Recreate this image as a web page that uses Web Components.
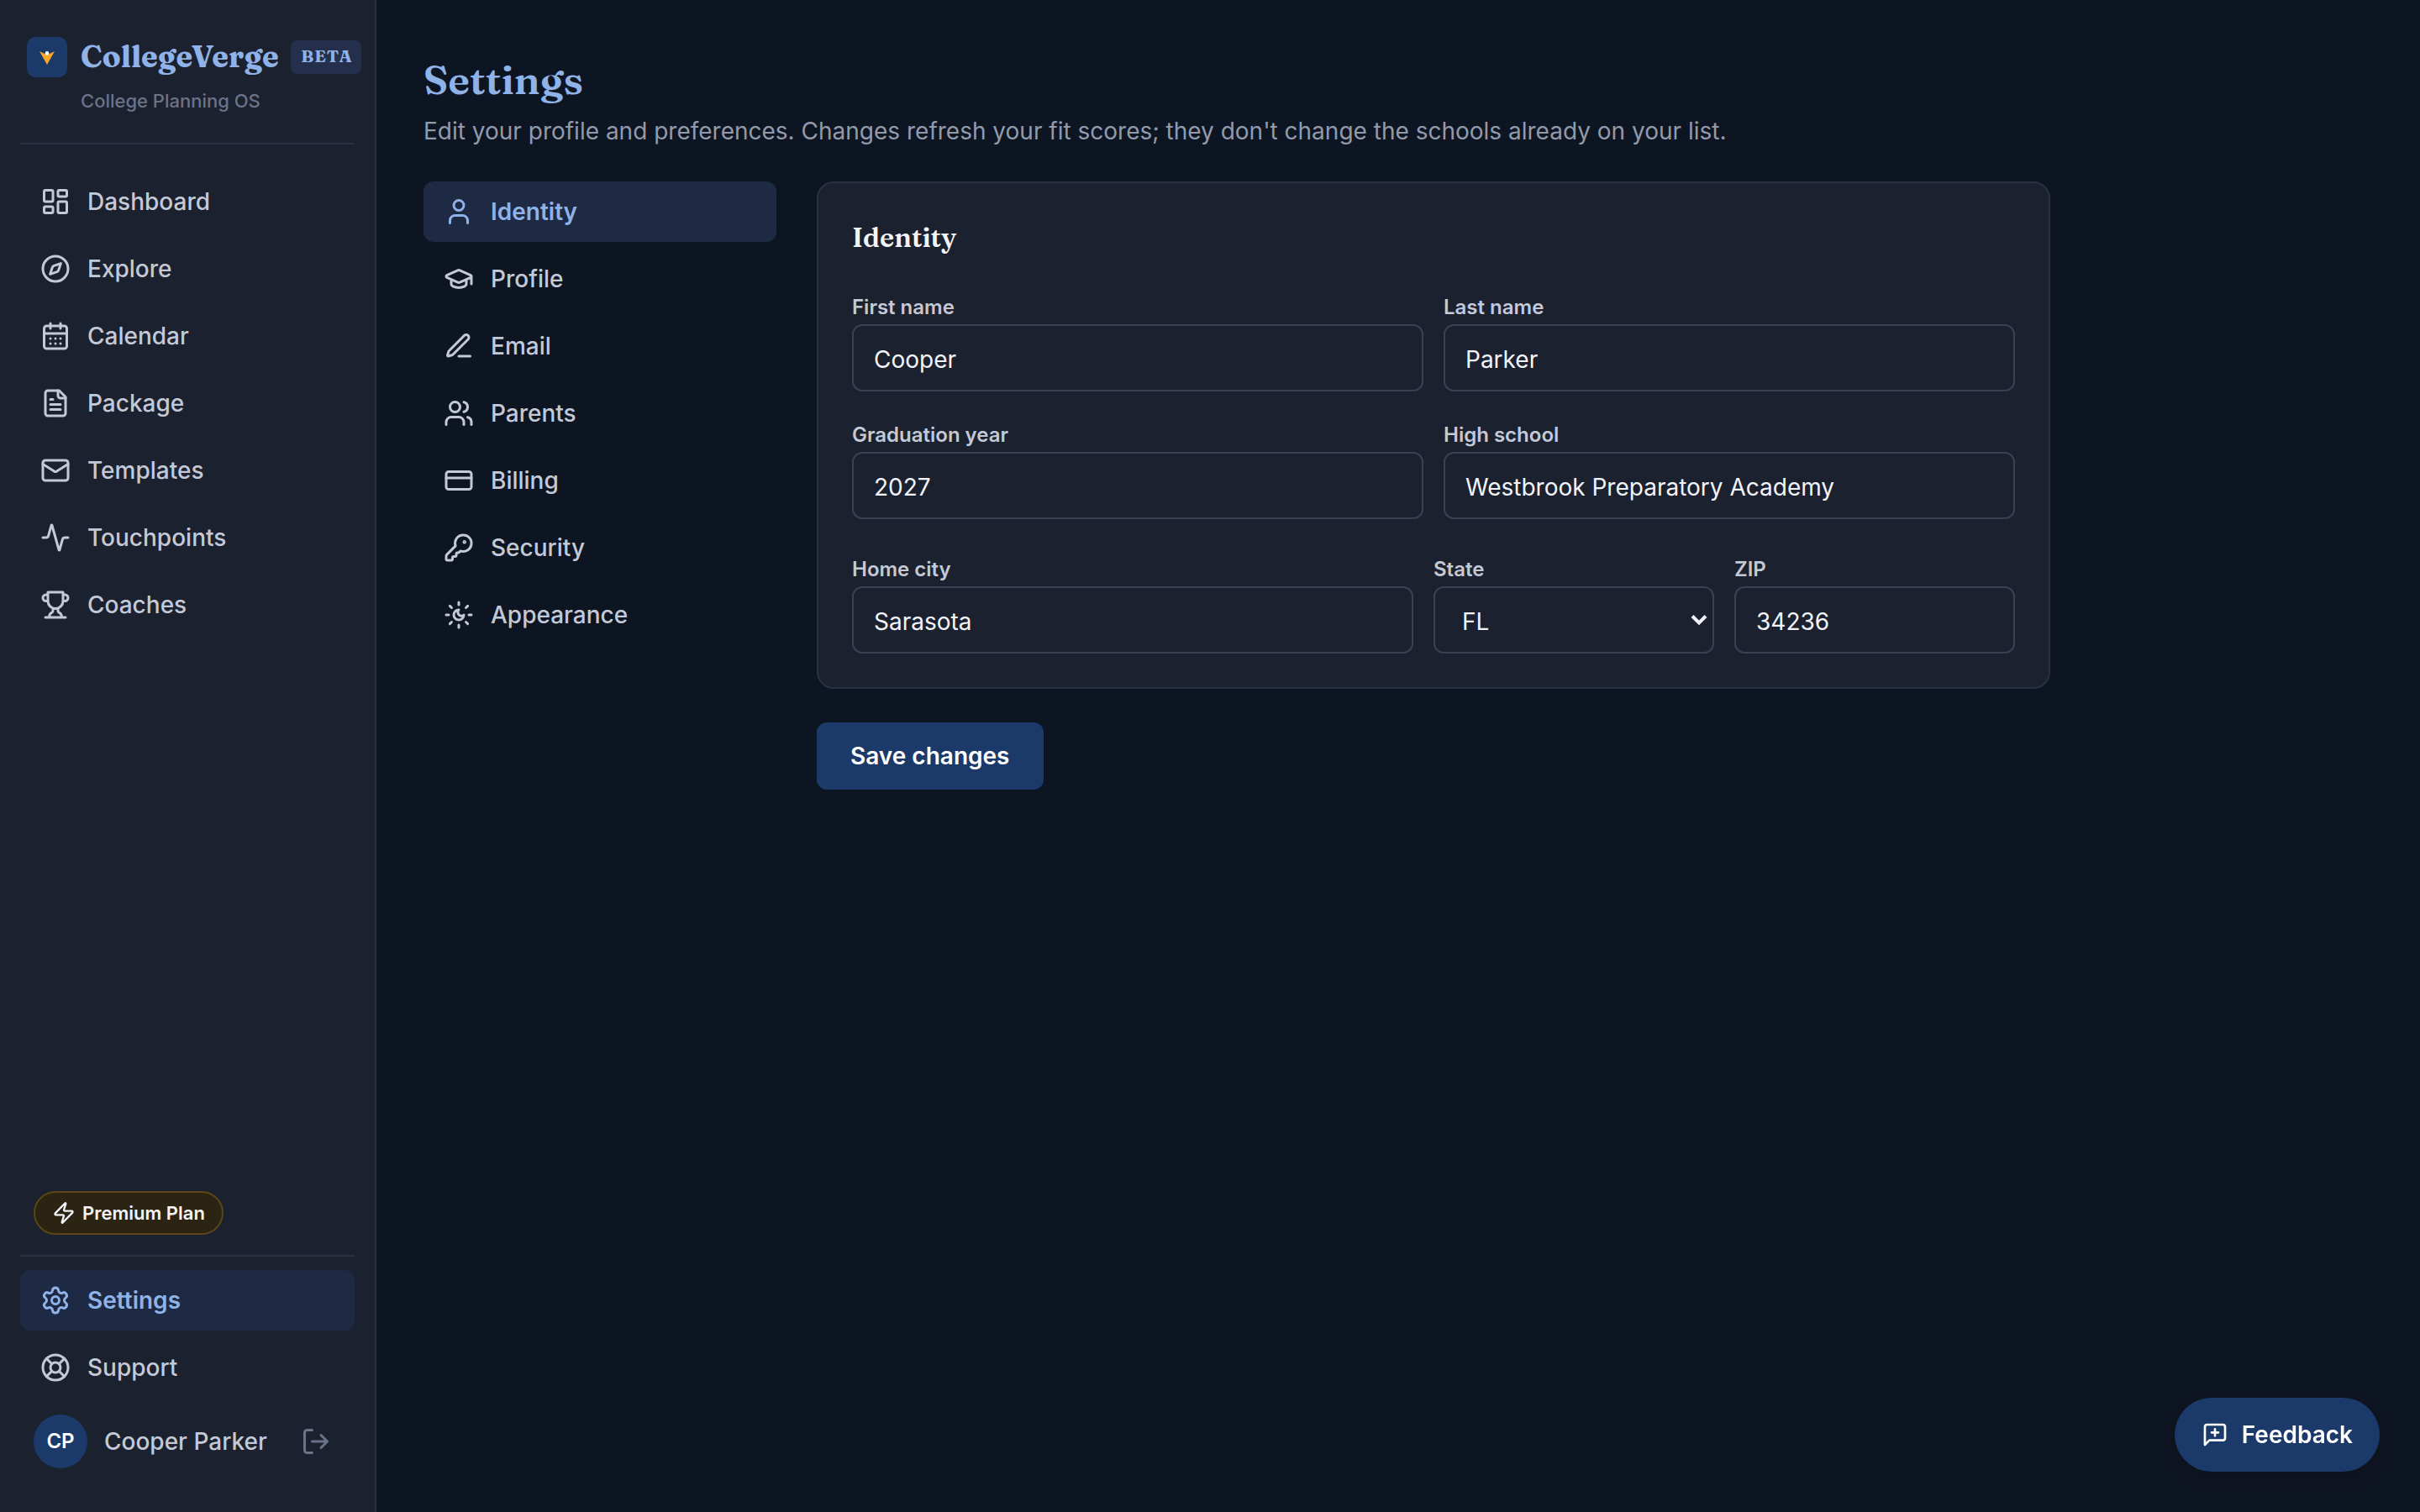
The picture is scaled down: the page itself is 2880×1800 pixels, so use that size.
<!DOCTYPE html>
<html lang="en">
<head>
<meta charset="utf-8">
<title>Settings - CollegeVerge</title>
<style>
  :root {
    --page: #0e1522;
    --surface: #1b212e;
    --line: #2b3144;
    --field-line: #394154;
    --navy: #1b3969;
    --accent: #8fb2e8;
    --active: #1e2943;
    --text: #f2f4fa;
    --text-2: #c4c9d8;
    --muted: #929aab;
    --dim: #6b7389;
    --serif: Fraunces, "Liberation Serif", serif;
  }

  body {
    margin: 0;
    background: var(--page);
    color: var(--text);
    font: 400 28px/1.5 Inter, "Liberation Sans", sans-serif;
  }
</style>
</head>
<body>
<cv-app>
  <cv-sidebar slot="sidebar">
    <cv-nav-item icon="dashboard">Dashboard</cv-nav-item>
    <cv-nav-item icon="compass">Explore</cv-nav-item>
    <cv-nav-item icon="calendar">Calendar</cv-nav-item>
    <cv-nav-item icon="file">Package</cv-nav-item>
    <cv-nav-item icon="mail">Templates</cv-nav-item>
    <cv-nav-item icon="activity">Touchpoints</cv-nav-item>
    <cv-nav-item icon="trophy">Coaches</cv-nav-item>

    <cv-plan slot="plan">Premium Plan</cv-plan>
    <cv-nav-item slot="footer" icon="settings" active>Settings</cv-nav-item>
    <cv-nav-item slot="footer" icon="support">Support</cv-nav-item>
    <cv-user slot="user" initials="CP">Cooper Parker</cv-user>
  </cv-sidebar>

  <cv-page heading="Settings">
    <span slot="intro">Edit your profile and preferences. Changes refresh your fit scores; they don't change the schools already on your list.</span>

    <cv-nav-item slot="tabs" icon="user" active>Identity</cv-nav-item>
    <cv-nav-item slot="tabs" icon="cap">Profile</cv-nav-item>
    <cv-nav-item slot="tabs" icon="pen">Email</cv-nav-item>
    <cv-nav-item slot="tabs" icon="users">Parents</cv-nav-item>
    <cv-nav-item slot="tabs" icon="card">Billing</cv-nav-item>
    <cv-nav-item slot="tabs" icon="key">Security</cv-nav-item>
    <cv-nav-item slot="tabs" icon="appearance">Appearance</cv-nav-item>

    <cv-card heading="Identity">
      <cv-field label="First name">Cooper</cv-field>
      <cv-field label="Last name">Parker</cv-field>
      <cv-field label="Graduation year">2027</cv-field>
      <cv-field label="High school">Westbrook Preparatory Academy</cv-field>
      <cv-field slot="address" label="Home city">Sarasota</cv-field>
      <cv-field slot="address" label="State" select>FL</cv-field>
      <cv-field slot="address" label="ZIP">34236</cv-field>
    </cv-card>
    <cv-button>Save changes</cv-button>
  </cv-page>

  <cv-feedback slot="floating">Feedback</cv-feedback>
</cv-app>

<script>
const icons = {
  dashboard: '<rect width="7" height="9" x="3" y="3" rx="1"/><rect width="7" height="5" x="14" y="3" rx="1"/><rect width="7" height="9" x="14" y="12" rx="1"/><rect width="7" height="5" x="3" y="16" rx="1"/>',
  compass: '<circle cx="12" cy="12" r="10"/><path d="m16.24 7.76-1.804 5.411a2 2 0 0 1-1.265 1.265L7.76 16.24l1.804-5.411a2 2 0 0 1 1.265-1.265z"/>',
  calendar: '<path d="M8 2v4M16 2v4M3 10h18M8 14h.01M12 14h.01M16 14h.01M8 18h.01M12 18h.01M16 18h.01"/><rect width="18" height="18" x="3" y="4" rx="2"/>',
  file: '<path d="M15 2H6a2 2 0 0 0-2 2v16a2 2 0 0 0 2 2h12a2 2 0 0 0 2-2V7Z"/><path d="M14 2v4a2 2 0 0 0 2 2h4M10 9H8M16 13H8M16 17H8"/>',
  mail: '<rect width="20" height="16" x="2" y="4" rx="2"/><path d="m22 7-8.991 5.727a2 2 0 0 1-2.009 0L2 7"/>',
  activity: '<path d="M22 12h-2.48a2 2 0 0 0-1.93 1.46l-2.35 8.36a.25.25 0 0 1-.48 0L9.24 2.18a.25.25 0 0 0-.48 0l-2.35 8.36A2 2 0 0 1 4.49 12H2"/>',
  trophy: '<path d="M6 9H4.5a2.5 2.5 0 0 1 0-5H6M18 9h1.5a2.5 2.5 0 0 0 0-5H18M4 22h16M10 14.66V17c0 .55-.47.98-.97 1.21C7.85 18.75 7 20.24 7 22M14 14.66V17c0 .55.47.98.97 1.21C16.15 18.75 17 20.24 17 22M18 2H6v7a6 6 0 0 0 12 0V2Z"/>',
  settings: '<path d="M9.671 4.136a2.34 2.34 0 0 1 4.659 0 2.34 2.34 0 0 0 3.319 1.915 2.34 2.34 0 0 1 2.33 4.033 2.34 2.34 0 0 0 0 3.831 2.34 2.34 0 0 1-2.33 4.033 2.34 2.34 0 0 0-3.319 1.915 2.34 2.34 0 0 1-4.659 0 2.34 2.34 0 0 0-3.32-1.915 2.34 2.34 0 0 1-2.33-4.033 2.34 2.34 0 0 0 0-3.831A2.34 2.34 0 0 1 6.35 6.051a2.34 2.34 0 0 0 3.319-1.915"/><circle cx="12" cy="12" r="3"/>',
  support: '<circle cx="12" cy="12" r="10"/><path d="m4.93 4.93 4.24 4.24M14.83 9.17l4.24-4.24M14.83 14.83l4.24 4.24M9.17 14.83l-4.24 4.24"/><circle cx="12" cy="12" r="4"/>',
  user: '<path d="M19 21v-2a4 4 0 0 0-4-4H9a4 4 0 0 0-4 4v2"/><circle cx="12" cy="7" r="4"/>',
  cap: '<path d="M21.42 10.922a1 1 0 0 0-.019-1.838L12.83 5.18a2 2 0 0 0-1.66 0L2.6 9.08a1 1 0 0 0 0 1.832l8.57 3.908a2 2 0 0 0 1.66 0zM22 10v6M6 12.5V16a6 3 0 0 0 12 0v-3.5"/>',
  pen: '<path d="M12 20h9M16.376 3.622a1 1 0 0 1 3.002 3.002L7.368 18.635a2 2 0 0 1-.855.506l-2.872.838a.5.5 0 0 1-.62-.62l.838-2.872a2 2 0 0 1 .506-.854z"/>',
  users: '<path d="M16 21v-2a4 4 0 0 0-4-4H6a4 4 0 0 0-4 4v2M22 21v-2a4 4 0 0 0-3-3.87M16 3.13a4 4 0 0 1 0 7.75"/><circle cx="9" cy="7" r="4"/>',
  card: '<rect width="20" height="14" x="2" y="5" rx="2"/><path d="M2 10h20"/>',
  key: '<path d="M2.586 17.414A2 2 0 0 0 2 18.828V21a1 1 0 0 0 1 1h3a1 1 0 0 0 1-1v-1a1 1 0 0 1 1-1h1a1 1 0 0 0 1-1v-1a1 1 0 0 1 1-1h.172a2 2 0 0 0 1.414-.586l.814-.814a6.5 6.5 0 1 0-4-4z"/><circle cx="16.5" cy="7.5" r=".5" fill="currentColor"/>',
  appearance: '<path d="M12 8a2.83 2.83 0 0 0 4 4 4 4 0 1 1-4-4M12 2v2M12 20v2M4.9 4.9l1.4 1.4M17.7 17.7l1.4 1.4M2 12h2M20 12h2M6.3 17.7l-1.4 1.4M19.1 4.9l-1.4 1.4"/>',
  zap: '<path d="M4 14a1 1 0 0 1-.78-1.63l9.9-10.2a.5.5 0 0 1 .86.46l-1.92 6.02A1 1 0 0 0 13 10h7a1 1 0 0 1 .78 1.63l-9.9 10.2a.5.5 0 0 1-.86-.46l1.92-6.02A1 1 0 0 0 11 14z"/>',
  logout: '<path d="m16 17 5-5-5-5M21 12H9M9 21H5a2 2 0 0 1-2-2V5a2 2 0 0 1 2-2h4"/>',
  message: '<path d="M21 15a2 2 0 0 1-2 2H7l-4 4V5a2 2 0 0 1 2-2h14a2 2 0 0 1 2 2zM12 7v6M9 10h6"/>'
}

// shared base: renders styles + html into an open shadow root
class CvElement extends HTMLElement {
  constructor() {
    super()
    this.attachShadow({ mode: 'open' })
  }

  connectedCallback() {
    const template = document.createElement('template')
    template.innerHTML = `<style>* { box-sizing: border-box; } ${this.styles()}</style>${this.html()}`
    this.shadowRoot.replaceChildren(template.content.cloneNode(true))
  }
}

class CvIcon extends CvElement {
  styles() {
    return `
      :host { display: block; flex: none; width: 36px; height: 36px; }
      svg { display: block; width: 100%; height: 100%; }`
  }

  html() {
    return `<svg viewBox="0 0 24 24" fill="none" stroke="currentColor" stroke-width="2"
      stroke-linecap="round" stroke-linejoin="round">${icons[this.getAttribute('name')]}</svg>`
  }
}

class CvApp extends CvElement {
  styles() {
    return `
      :host { display: grid; grid-template-columns: 448px 1fr; height: 100vh; overflow: hidden; }
      .floating { position: fixed; right: 48px; bottom: 48px; }`
  }

  html() {
    return `<slot name="sidebar"></slot>
      <slot></slot>
      <div class="floating"><slot name="floating"></slot></div>`
  }
}

class CvBrand extends CvElement {
  styles() {
    return `
      :host { display: block; height: 172px; padding: 44px 0 0 8px; border-bottom: 2px solid var(--line); }
      .row { display: flex; align-items: center; height: 48px; white-space: nowrap; }
      svg { flex: none; width: 48px; height: 48px; }
      .name { flex: none; width: 266px; padding-left: 16px; color: var(--accent); font: 700 36px/46px var(--serif); height: 48px; }
      .beta {
        flex: none; width: 84px; height: 40px; padding-left: 2px; border-radius: 8px; text-align: center;
        background: #24304b; color: var(--accent);
        font: 700 20px/38px var(--serif); letter-spacing: 1px;
      }
      .tagline { margin: 10px 0 0 64px; color: var(--dim); font-size: 22px; font-weight: 500; line-height: 36px; }`
  }

  html() {
    return `<div class="row">
        <svg viewBox="0 0 48 48">
          <rect width="48" height="48" rx="10" fill="#1b3969"/>
          <path d="M15 17 24 21.5 33 17 24 33Z" fill="#f9a826"/>
          <circle cx="24" cy="19.4" r="2.3" fill="#fff"/>
        </svg>
        <span class="name">CollegeVerge</span>
        <span class="beta">BETA</span>
      </div>
      <div class="tagline">College Planning OS</div>`
  }
}

class CvSidebar extends CvElement {
  styles() {
    return `
      :host {
        display: flex; flex-direction: column; padding: 0 24px 40px;
        background: var(--surface); border-right: 2px solid var(--line);
      }
      nav { display: flex; flex-direction: column; gap: 8px; }
      .main { flex: 1; padding-top: 32px; }
      .plan { display: flex; padding: 0 16px 24px; border-bottom: 2px solid var(--line); }
      .footer { padding: 16px 0 8px; }`
  }

  html() {
    return `<cv-brand></cv-brand>
      <nav class="main"><slot></slot></nav>
      <div class="plan"><slot name="plan"></slot></div>
      <nav class="footer"><slot name="footer"></slot></nav>
      <slot name="user"></slot>`
  }
}

class CvNavItem extends CvElement {
  styles() {
    return `
      :host {
        display: flex; align-items: center; gap: 20px; height: 72px; padding: 0 24px;
        box-sizing: border-box; border-radius: 12px; color: var(--text-2); font-weight: 500;
      }
      :host([active]) { background: var(--active); color: var(--accent); font-weight: 600; }`
  }

  html() {
    return `<cv-icon name="${this.getAttribute('icon')}"></cv-icon><span><slot></slot></span>`
  }
}

class CvPlan extends CvElement {
  styles() {
    return `
      :host {
        display: flex; align-items: center; gap: 8px; height: 52px; padding: 0 20px;
        box-sizing: border-box; border: 2px solid #5a4617; border-radius: 26px;
        background: #2b2412; font-size: 22px; font-weight: 600;
      }
      cv-icon { width: 28px; height: 28px; }`
  }

  html() {
    return `<cv-icon name="zap"></cv-icon><slot></slot>`
  }
}

class CvUser extends CvElement {
  styles() {
    return `
      :host {
        display: flex; align-items: center; height: 88px; padding: 0 28px 0 16px;
        box-sizing: border-box; color: var(--text-2); font-weight: 500;
      }
      .avatar {
        width: 64px; height: 64px; margin-right: 20px; border-radius: 50%;
        background: var(--navy); color: #fff;
        font-size: 24px; font-weight: 600; line-height: 64px; text-align: center;
      }
      .name { flex: 1; }
      cv-icon { color: var(--dim); }`
  }

  html() {
    return `<span class="avatar">${this.getAttribute('initials')}</span>
      <span class="name"><slot></slot></span>
      <cv-icon name="logout"></cv-icon>`
  }
}

class CvPage extends CvElement {
  styles() {
    return `
      :host { display: block; padding: 64px 56px; }
      h1 { margin: 0; color: var(--accent); font: 600 48px/62px var(--serif); }
      p { margin: 8px 0 0; color: var(--muted); line-height: 44px; }
      .columns { display: grid; grid-template-columns: 420px 1468px; gap: 48px; margin-top: 38px; }
      nav { display: flex; flex-direction: column; gap: 8px; }
      .panel { display: flex; flex-direction: column; align-items: flex-start; gap: 40px; }`
  }

  html() {
    return `<h1>${this.getAttribute('heading')}</h1>
      <p><slot name="intro"></slot></p>
      <div class="columns">
        <nav><slot name="tabs"></slot></nav>
        <div class="panel"><slot></slot></div>
      </div>`
  }
}

class CvCard extends CvElement {
  styles() {
    return `
      :host {
        display: block; width: 100%; padding: 40px; box-sizing: border-box;
        background: var(--surface); border: 2px solid var(--line); border-radius: 20px;
      }
      h2 { margin: 0 0 40px; font: 600 32px/50px var(--serif); }
      .grid { display: grid; grid-template-columns: 1fr 1fr; gap: 34px 24px; }
      .address { grid-template-columns: 2fr 1fr 1fr; margin-top: 42px; }`
  }

  html() {
    return `<h2>${this.getAttribute('heading')}</h2>
      <div class="grid"><slot></slot></div>
      <div class="grid address"><slot name="address"></slot></div>`
  }
}

class CvField extends CvElement {
  styles() {
    return `
      :host { display: block; }
      .label { margin-bottom: 2px; color: var(--text-2); font-size: 24px; font-weight: 600; line-height: 36px; }
      .control {
        display: flex; align-items: center; justify-content: space-between;
        height: 80px; padding: 4px 24px 0; border: 2px solid var(--field-line); border-radius: 12px;
      }
      :host([select]) .control { padding: 4px 6px 0 32px; }
      svg { width: 20px; height: 14px; margin-top: -4px; }`
  }

  html() {
    const arrow = this.hasAttribute('select')
      ? '<svg viewBox="0 0 20 14" fill="none" stroke="currentColor" stroke-width="4"><path d="m2 2.5 8 8 8-8"/></svg>'
      : ''
    return `<div class="label">${this.getAttribute('label')}</div>
      <div class="control"><span><slot></slot></span>${arrow}</div>`
  }
}

class CvButton extends CvElement {
  styles() {
    return `
      :host {
        display: block; min-width: 270px; height: 80px; padding: 0 40px; box-sizing: border-box;
        border-radius: 12px; background: var(--navy); color: #fff; font-weight: 600; line-height: 80px;
      }`
  }

  html() {
    return `<slot></slot>`
  }
}

class CvFeedback extends CvElement {
  styles() {
    return `
      :host {
        display: flex; align-items: center; gap: 16px; height: 88px; padding: 0 32px;
        box-sizing: border-box; border-radius: 44px; background: var(--navy); color: #fff;
        font-weight: 600; box-shadow: 0 8px 24px rgba(14, 17, 24, .5);
      }
      cv-icon { width: 32px; height: 32px; }`
  }

  html() {
    return `<cv-icon name="message"></cv-icon><slot></slot>`
  }
}

customElements.define('cv-icon', CvIcon)
customElements.define('cv-brand', CvBrand)
customElements.define('cv-app', CvApp)
customElements.define('cv-sidebar', CvSidebar)
customElements.define('cv-nav-item', CvNavItem)
customElements.define('cv-plan', CvPlan)
customElements.define('cv-user', CvUser)
customElements.define('cv-page', CvPage)
customElements.define('cv-card', CvCard)
customElements.define('cv-field', CvField)
customElements.define('cv-button', CvButton)
customElements.define('cv-feedback', CvFeedback)
</script>
</body>
</html>
